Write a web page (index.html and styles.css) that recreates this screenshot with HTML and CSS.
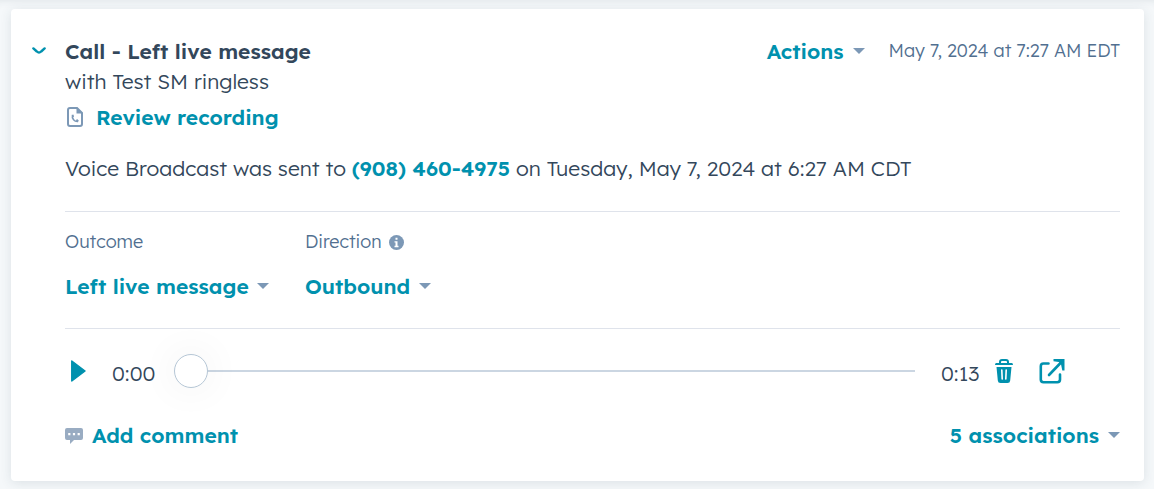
FILE: index.html
```html
<!DOCTYPE html>
<html lang="en">
<head>
<meta charset="UTF-8">
<meta name="viewport" content="width=device-width, initial-scale=1.0">
<title>Call - Left live message</title>
<link rel="stylesheet" href="styles.css">
</head>
<body>

<article class="card">
  <header class="card-header">
    <button class="toggle" aria-label="Collapse" aria-expanded="true">
      <svg width="14" height="8" viewBox="0 0 14 8"><path d="M1.400 1.400L4.800 4.500Q7 6.600 9.200 4.500L12.600 1.400" fill="none" stroke="currentColor" stroke-width="2.400" stroke-linecap="round"/></svg>
    </button>
    <h2 class="title">Call - Left live message</h2>
    <button class="link-button actions">Actions <span class="caret"></span></button>
    <time class="date" datetime="2024-05-07T07:27-04:00">May 7, 2024 at 7:27 AM EDT</time>
  </header>

  <p class="contact">with Test SM ringless</p>
  <a class="review" href="#recording">
    <svg width="16" height="20" viewBox="0 0 16 20">
      <path d="M3 1h7l5 5v11a2 2 0 0 1-2 2H3a2 2 0 0 1-2-2V3a2 2 0 0 1 2-2z" fill="none" stroke="#7c98b6" stroke-width="2"/>
      <path d="M9.500 0l6.500 6.500H9.500z" fill="#7c98b6"/>
      <path d="M5.500 8C4.500 11.500 7.500 15 11 14.500" fill="none" stroke="#7c98b6" stroke-width="1.500"/>
      <path d="M4.800 8l1.500-.4.8 2-1.500 1zM8.800 13.400l1.200-1.300 1.800 1.300-.8 1.700z" fill="#7c98b6"/>
    </svg>
    Review recording
  </a>
  <p class="message">Voice Broadcast was sent to <a href="tel:9084604975">(908) 460-4975</a> on Tuesday, May 7, 2024 at 6:27 AM CDT</p>

  <div class="properties">
    <div class="property">
      <label for="outcome">Outcome</label>
      <div class="select-wrap">
        <select id="outcome"><option>Left live message</option></select>
        <span class="caret"></span>
      </div>
    </div>
    <div class="property">
      <label for="direction">Direction
        <svg width="15" height="15" viewBox="0 0 15 15"><circle cx="7.500" cy="7.500" r="7.500" fill="#7c98b6"/><path d="M6.500 2.800h2v2h-2zM5.500 6.200h3v4.600h1v1.400h-4v-1.400h1V7.600h-1z" fill="#fff"/></svg>
      </label>
      <div class="select-wrap">
        <select id="direction"><option>Outbound</option></select>
        <span class="caret"></span>
      </div>
    </div>
  </div>

  <div class="player">
    <button class="play" aria-label="Play">
      <svg width="16" height="22" viewBox="0 0 16 22"><path d="M1.800 1v20L15 11z" fill="currentColor" stroke="currentColor" stroke-width="1.500" stroke-linejoin="round"/></svg>
    </button>
    <span class="time">0:00</span>
    <input class="seek" type="range" min="0" max="13" value="0" aria-label="Seek">
    <span class="time">0:13</span>
    <button class="delete" aria-label="Delete">
      <svg width="18" height="24" viewBox="0 0 18 24">
        <path d="M5 4.500V3q0-2 2-2h4q2 0 2 2v1.500" fill="none" stroke="currentColor" stroke-width="2"/>
        <path d="M1.200 4h15.600q1.200 0 1.200 2H0q0-2 1.200-2z" fill="currentColor"/>
        <path d="M1.500 8h15l-1.300 13.500Q15 24 12.500 24h-7Q3 24 2.800 21.500z" fill="currentColor"/>
        <path d="M6.800 11l.4 9M11.200 11l-.4 9" stroke="#fff" stroke-width="1.600" stroke-linecap="round"/>
      </svg>
    </button>
    <button class="open" aria-label="Open recording">
      <svg width="26" height="26" viewBox="0 0 26 26">
        <path d="M9.500 5.500H4.500Q1.800 5.500 1.800 8.200v13.300q0 2.700 2.700 2.700h13.800q2.700 0 2.700-2.700V16.500M10 17L22 4.500" fill="none" stroke="currentColor" stroke-width="2.600" stroke-linecap="round"/>
        <path d="M14.500 1h11v11.500h-2.200L22 6.200 19.800 4 14.500 3.200z" fill="currentColor"/>
      </svg>
    </button>
  </div>

  <footer class="card-footer">
    <button class="link-button comment">
      <svg width="18" height="18" viewBox="0 0 18 18"><path d="M2 2h14q2 0 2 2v8q0 2-2 2H9l-4 4v-4H2q-2 0-2-2V4q0-2 2-2z" fill="#99acc2"/><path d="M3.200 7h2.200v2.200H3.200zM7.900 7h2.200v2.200H7.900zM12.600 7h2.200v2.200h-2.200z" fill="#fff"/></svg>
      Add comment
    </button>
    <button class="link-button">5 associations <span class="caret"></span></button>
  </footer>
</article>

</body>
</html>
```
FILE: styles.css
```css
* {
  box-sizing: border-box;
}

body {
  margin: 0;
  padding: 9px 10px 8px 11px;
  background: #f5f8fa;
  box-shadow: inset 0 8px 8px -8px rgba(45, 62, 80, 0.12);
  color: #33475b;
  font-family: Lexend, Inter, sans-serif;
  font-size: 21px;
  line-height: 30px;
}

h2, p {
  margin: 0;
  font-size: 21px;
}

a, button, select {
  color: #0091ae;
  font: inherit;
  font-weight: 600;
  text-decoration: none;
}

button, select {
  padding: 0;
  border: 0;
  background: none;
  cursor: pointer;
}

svg {
  display: block;
  flex: none;
}

.card {
  padding: 27px 24px 31px 54px;
  border-radius: 4px;
  background: #fff;
  box-shadow: 0 2px 12px rgba(45, 62, 80, 0.12);
  font-weight: 300;
}

.card-header {
  display: flex;
  align-items: center;
  margin-left: -33px;
}

.toggle {
  width: 33px;
}

.title {
  flex: 1;
  font-weight: 600;
}

.link-button {
  display: flex;
  align-items: center;
  gap: 9px;
}

.caret {
  flex: none;
  border: 6px solid transparent;
  border-top-color: #7c98b6;
  border-bottom: 0;
}

.date {
  margin-left: 24px;
  color: #516f90;
  font-size: 18px;
}

.review {
  display: flex;
  align-items: center;
  gap: 13px;
  width: fit-content;
  margin-top: 6px;
  padding-left: 2px;
}

.message {
  margin: 21px 0 28px;
}

.properties {
  display: flex;
  gap: 36px;
  padding: 15px 0 27px;
  border: 1px solid #dfe3eb;
  border-width: 1px 0;
}

.property label {
  display: flex;
  align-items: center;
  gap: 7px;
  color: #516f90;
  font-size: 18px;
}

.select-wrap {
  display: flex;
  align-items: center;
  width: fit-content;
  margin-top: 14px;
}

.select-wrap select {
  appearance: none;
  margin-right: -12px;
  padding-right: 20px;
}

.select-wrap .caret {
  pointer-events: none;
}

.player {
  display: flex;
  align-items: center;
  padding: 25px 55px 0 5px;
}

.time {
  flex: none;
  width: 44px;
  margin-left: 26px;
  padding-top: 4px;
}

.seek {
  flex: 1;
  min-width: 0;
  height: 34px;
  margin: 0 0 0 18px;
  appearance: none;
  background: linear-gradient(#cbd6e2, #cbd6e2) center / 100% 2px no-repeat;
}

.seek::-webkit-slider-thumb {
  appearance: none;
  width: 34px;
  height: 34px;
  border: 1px solid #b6c7d6;
  border-radius: 50%;
  background: #fff;
  box-shadow: 0 0 40px rgba(0, 0, 0, 0.07);
}

.delete {
  margin-left: 10px;
}

.open {
  margin-left: 26px;
}

.card-footer {
  display: flex;
  justify-content: space-between;
  margin-top: 32px;
}
```
